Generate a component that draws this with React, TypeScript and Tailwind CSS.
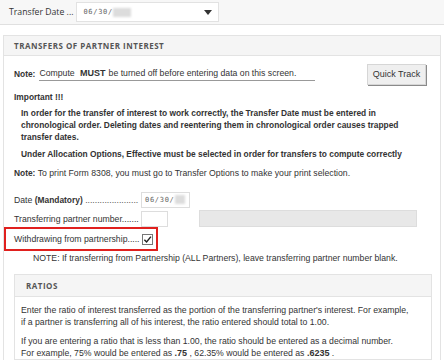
import React from "react";

const dots = (n: number) => ".".repeat(n);

function DateValue({ width }: { width: number }) {
  return (
    <span className="flex items-center">
      <span className="font-['DejaVu_Sans_Mono',monospace] text-[7px] tracking-[0.7px] text-[#666]">06/30/</span>
      <span className="h-[9px] bg-[#dcdcdc] blur-[1px]" style={{ width }} />
    </span>
  );
}

export default function App() {
  return (
    <div className="w-[444px] h-[360px] overflow-hidden bg-white font-['Liberation_Sans',Arial,sans-serif] text-[8.7px] leading-[12px] text-[#333]">
      <div className="h-[25px] bg-[#f7f7f7] border-b border-[#e0e0e0] flex items-center pl-[9px]">
        <span className="font-['Open_Sans',sans-serif] text-[8.7px] text-[#333]">Transfer Date ...</span>
        <div className="ml-[3px] w-[143px] h-[20px] bg-white border border-[#e2e2e2] flex items-center pl-[6px] pr-[6px]">
          <DateValue width={18} />
          <span className="ml-auto w-0 h-0 border-l-[4px] border-r-[4px] border-t-[5px] border-l-transparent border-r-transparent border-t-[#333]" />
        </div>
      </div>

      <div className="mx-[3px] mt-[10px] border border-[#e3e3e3] h-[400px]">
        <div className="h-[20px] bg-[#f5f5f5] border-b border-[#e3e3e3] flex items-center px-[10px]">
          <span className="font-['Open_Sans',sans-serif] font-bold text-[8px] tracking-[0.5px] text-[#555]">TRANSFERS OF PARTNER INTEREST</span>
        </div>

        <div className="pl-[10px] pr-[8px]">
          <div className="flex items-center mt-[7px] h-[22px]">
            <span className="font-bold text-[8.4px]">Note:</span>
            <span className="ml-[4px] border-b border-[#999] pb-[1px] w-[276px] whitespace-nowrap">
              Compute <span className="font-bold text-[9px] mx-[3px]">MUST</span>be turned off before entering data on this screen.
            </span>
            <button className="ml-auto mr-[6px] w-[59px] h-[21px] bg-[#efefef] border border-[#d6d6d6] shadow-[1px_1px_0_#8a8a8a] text-[9px] text-[#333]">
              Quick Track
            </button>
          </div>

          <div className="font-bold text-[8.4px] mt-[6px]">Important !!!</div>
          <div className="pl-[7px] font-bold text-[8.4px] mt-[4px] whitespace-nowrap">
            <div>In order for the transfer of interest to work correctly, the Transfer Date must be entered in</div>
            <div>chronological order. Deleting dates and reentering them in chronological order causes trapped</div>
            <div>transfer dates.</div>
          </div>
          <div className="pl-[7px] font-bold text-[8.4px] mt-[5px] whitespace-nowrap">
            Under Allocation Options, Effective must be selected in order for transfers to compute correctly
          </div>
          <div className="mt-[7px] whitespace-nowrap">
            <span className="font-bold text-[8.4px]">Note:</span> To print Form 8308, you must go to Transfer Options to make your print selection.
          </div>

          <div className="mt-[12px] flex items-center h-[17px]">
            <span className="w-[127px] whitespace-nowrap overflow-hidden">
              Date <span className="font-bold text-[8.4px]">(Mandatory)</span> <span className="text-[#555]">{dots(22)}</span>
            </span>
            <div className="w-[49px] h-[16px] border border-[#ddd] flex items-center px-[3px]">
              <DateValue width={10} />
            </div>
          </div>
          <div className="mt-[2px] flex items-center h-[17px]">
            <span className="w-[127px] whitespace-nowrap">Transferring partner number.......</span>
            <div className="w-[27px] h-[16px] border border-[#ddd]" />
            <div className="ml-[31px] w-[218px] h-[17px] bg-[#e8e8e8] border border-[#ddd]" />
          </div>
          <div className="-ml-[10px] w-[154px] h-[24px] border-2 border-[#e0201e] flex items-center pl-[8px]">
            <span className="w-[126px] whitespace-nowrap">Withdrawing from partnership.....</span>
            <span className="ml-[2px] w-[11px] h-[11px] border border-[#777] bg-white flex items-center justify-center">
              <svg viewBox="0 0 10 10" className="w-[9px] h-[9px]">
                <path d="M1.5 5.2 L4 7.8 L8.8 1.8" fill="none" stroke="#222" strokeWidth="1.6" />
              </svg>
            </span>
          </div>
          <div className="pl-[19px] mt-[1px] whitespace-nowrap">
            NOTE: If transferring from Partnership (ALL Partners), leave transferring partner number blank.
          </div>

          <div className="mt-[10px] border border-[#e3e3e3]">
            <div className="h-[22px] bg-[#f5f5f5] border-b border-[#e3e3e3] flex items-center px-[11px]">
              <span className="font-['Open_Sans',sans-serif] font-bold text-[8px] tracking-[0.5px] text-[#555]">RATIOS</span>
            </div>
            <div className="px-[6px] pt-[7px] whitespace-nowrap">
              <div>Enter the ratio of interest transferred as the portion of the transferring partner's interest. For example,</div>
              <div>if a partner is transferring all of his interest, the ratio entered should total to 1.00.</div>
              <div className="mt-[7px]">If you are entering a ratio that is less than 1.00, the ratio should be entered as a decimal number.</div>
              <div>
                For example, 75% would be entered as <span className="font-bold text-[9px]">.75</span> , 62.35% would be entered as <span className="font-bold text-[9px]">.6235</span> .
              </div>
            </div>
          </div>
        </div>
      </div>
    </div>
  );
}
